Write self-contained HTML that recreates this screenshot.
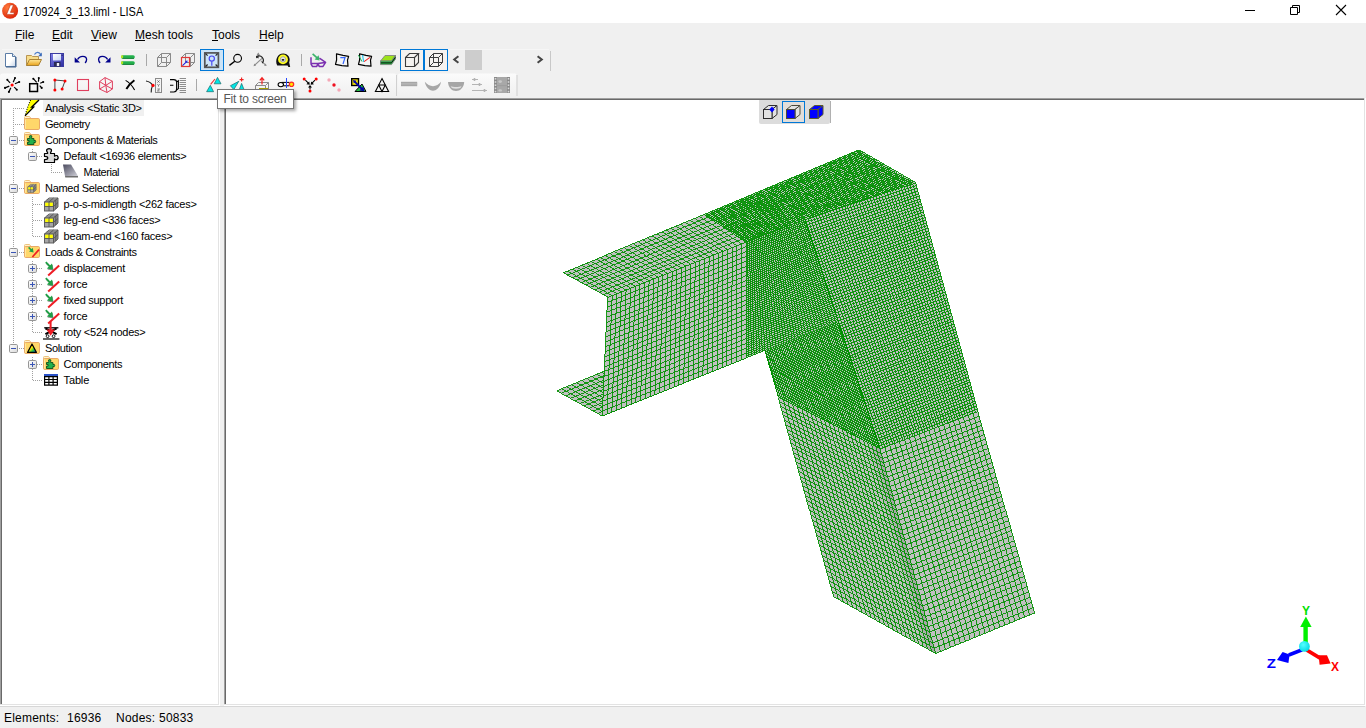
<!DOCTYPE html><html><head><meta charset="utf-8"><title>LISA</title><style>
html,body{margin:0;padding:0;width:1366px;height:728px;overflow:hidden;background:#f0f0f0;
 font-family:"Liberation Sans",sans-serif;color:#000}
.abs{position:absolute}
#title{left:0;top:0;width:1366px;height:23px;background:#fff}
#title .t{position:absolute;left:23px;top:5px;font-size:12px;line-height:15px;white-space:nowrap;
 transform:scaleX(.915);transform-origin:0 0}
.menu{position:absolute;top:28px;font-size:12px;line-height:15px;white-space:nowrap}
.menu u{text-decoration:underline;text-underline-offset:1px}
#tree{left:0;top:98px;width:218px;height:606px;background:#fff;box-sizing:border-box;
 border-left:1px solid #a0a0a0;border-top:1px solid #a0a0a0}
#tree:before{content:"";position:absolute;left:0;top:0;right:0;bottom:0;border-left:1px solid #696969;border-top:1px solid #696969}
.tl{position:absolute;font-size:11px;line-height:16px;height:16px;white-space:nowrap}
#view{left:224px;top:98px;width:1140px;height:606px;background:#fff;box-sizing:border-box;
 border-left:1px solid #a0a0a0;border-top:1px solid #a0a0a0}
#view:before{content:"";position:absolute;left:0;top:0;right:0;bottom:0;border-left:1px solid #696969;border-top:1px solid #696969}
.st{position:absolute;top:711px;font-size:12px;line-height:15px;white-space:nowrap;letter-spacing:.22px}
</style></head><body><div id="title" class="abs"><div class="t">170924_3_13.liml - LISA</div></div><div class="menu" style="left:15px"><u>F</u>ile</div><div class="menu" style="left:52px"><u>E</u>dit</div><div class="menu" style="left:91px"><u>V</u>iew</div><div class="menu" style="left:135px"><u>M</u>esh tools</div><div class="menu" style="left:212px"><u>T</u>ools</div><div class="menu" style="left:259px"><u>H</u>elp</div><div id="tree" class="abs"></div><div class="abs" style="left:43px;top:100px;width:101px;height:16px;background:#f0f0f0"></div><div class="abs" style="left:218px;top:98px;width:1px;height:607px;background:#e3e3e3"></div><div class="abs" style="left:219px;top:98px;width:1px;height:608px;background:#fff"></div><div class="abs" style="left:0;top:704px;width:219px;height:1px;background:#e3e3e3"></div><div class="abs" style="left:0;top:705px;width:220px;height:1px;background:#fff"></div><div id="view" class="abs"></div><div class="abs" style="left:1364px;top:98px;width:1px;height:607px;background:#e3e3e3"></div><div class="abs" style="left:1365px;top:98px;width:1px;height:608px;background:#fff"></div><div class="abs" style="left:224px;top:704px;width:1141px;height:1px;background:#e3e3e3"></div><div class="abs" style="left:224px;top:705px;width:1142px;height:1px;background:#fff"></div><div class="abs" style="left:0;top:706px;width:1365px;height:1px;background:#d7d7d7"></div><div class="tl" style="left:45.0px;top:100px;letter-spacing:-0.235px">Analysis &lt;Static 3D&gt;</div><div class="tl" style="left:45.0px;top:116px;letter-spacing:-0.438px">Geometry</div><div class="tl" style="left:45.0px;top:132px;letter-spacing:-0.361px">Components &amp; Materials</div><div class="tl" style="left:63.6px;top:148px;letter-spacing:-0.256px">Default &lt;16936 elements&gt;</div><div class="tl" style="left:83.6px;top:164px;letter-spacing:-0.463px">Material</div><div class="tl" style="left:45.0px;top:180px;letter-spacing:-0.294px">Named Selections</div><div class="tl" style="left:63.6px;top:196px;letter-spacing:-0.260px">p-o-s-midlength &lt;262 faces&gt;</div><div class="tl" style="left:63.6px;top:212px;letter-spacing:-0.179px">leg-end &lt;336 faces&gt;</div><div class="tl" style="left:63.6px;top:228px;letter-spacing:-0.212px">beam-end &lt;160 faces&gt;</div><div class="tl" style="left:45.0px;top:244px;letter-spacing:-0.398px">Loads &amp; Constraints</div><div class="tl" style="left:63.6px;top:260px;letter-spacing:-0.286px">displacement</div><div class="tl" style="left:63.6px;top:276px;letter-spacing:-0.094px">force</div><div class="tl" style="left:63.6px;top:292px;letter-spacing:-0.268px">fixed support</div><div class="tl" style="left:63.6px;top:308px;letter-spacing:-0.094px">force</div><div class="tl" style="left:63.6px;top:324px;letter-spacing:-0.231px">roty &lt;524 nodes&gt;</div><div class="tl" style="left:45.0px;top:340px;letter-spacing:-0.384px">Solution</div><div class="tl" style="left:63.6px;top:356px;letter-spacing:-0.390px">Components</div><div class="tl" style="left:63.6px;top:372px;letter-spacing:-0.160px">Table</div><svg class="abs" style="left:0;top:0" width="230" height="400" viewBox="0 0 230 400"><path d="M13.5,108V348" stroke="#a0a0a0" stroke-width="1" stroke-dasharray="1 1" shape-rendering="crispEdges"/><path d="M13,108.5H24" stroke="#a0a0a0" stroke-width="1" stroke-dasharray="1 1" shape-rendering="crispEdges"/><path d="M13,124.5H24" stroke="#a0a0a0" stroke-width="1" stroke-dasharray="1 1" shape-rendering="crispEdges"/><path d="M19,140.5H24" stroke="#a0a0a0" stroke-width="1" stroke-dasharray="1 1" shape-rendering="crispEdges"/><path d="M19,188.5H24" stroke="#a0a0a0" stroke-width="1" stroke-dasharray="1 1" shape-rendering="crispEdges"/><path d="M19,252.5H24" stroke="#a0a0a0" stroke-width="1" stroke-dasharray="1 1" shape-rendering="crispEdges"/><path d="M19,348.5H24" stroke="#a0a0a0" stroke-width="1" stroke-dasharray="1 1" shape-rendering="crispEdges"/><path d="M32.5,149V152" stroke="#a0a0a0" stroke-width="1" stroke-dasharray="1 1" shape-rendering="crispEdges"/><path d="M37,156.5H43" stroke="#a0a0a0" stroke-width="1" stroke-dasharray="1 1" shape-rendering="crispEdges"/><path d="M51.5,164V173" stroke="#a0a0a0" stroke-width="1" stroke-dasharray="1 1" shape-rendering="crispEdges"/><path d="M51,172.5H62" stroke="#a0a0a0" stroke-width="1" stroke-dasharray="1 1" shape-rendering="crispEdges"/><path d="M32.5,197V237" stroke="#a0a0a0" stroke-width="1" stroke-dasharray="1 1" shape-rendering="crispEdges"/><path d="M33,204.5H43" stroke="#a0a0a0" stroke-width="1" stroke-dasharray="1 1" shape-rendering="crispEdges"/><path d="M33,220.5H43" stroke="#a0a0a0" stroke-width="1" stroke-dasharray="1 1" shape-rendering="crispEdges"/><path d="M33,236.5H43" stroke="#a0a0a0" stroke-width="1" stroke-dasharray="1 1" shape-rendering="crispEdges"/><path d="M32.5,261V333" stroke="#a0a0a0" stroke-width="1" stroke-dasharray="1 1" shape-rendering="crispEdges"/><path d="M37,268.5H43" stroke="#a0a0a0" stroke-width="1" stroke-dasharray="1 1" shape-rendering="crispEdges"/><path d="M37,284.5H43" stroke="#a0a0a0" stroke-width="1" stroke-dasharray="1 1" shape-rendering="crispEdges"/><path d="M37,300.5H43" stroke="#a0a0a0" stroke-width="1" stroke-dasharray="1 1" shape-rendering="crispEdges"/><path d="M37,316.5H43" stroke="#a0a0a0" stroke-width="1" stroke-dasharray="1 1" shape-rendering="crispEdges"/><path d="M33,332.5H43" stroke="#a0a0a0" stroke-width="1" stroke-dasharray="1 1" shape-rendering="crispEdges"/><path d="M32.5,357V381" stroke="#a0a0a0" stroke-width="1" stroke-dasharray="1 1" shape-rendering="crispEdges"/><path d="M37,364.5H43" stroke="#a0a0a0" stroke-width="1" stroke-dasharray="1 1" shape-rendering="crispEdges"/><path d="M33,380.5H43" stroke="#a0a0a0" stroke-width="1" stroke-dasharray="1 1" shape-rendering="crispEdges"/><rect x="9.5" y="136.5" width="8" height="8" rx="1.2" fill="url(#gbox)" stroke="#969696"/><rect x="11" y="140" width="5" height="1" fill="#3a55b5"/><rect x="9.5" y="184.5" width="8" height="8" rx="1.2" fill="url(#gbox)" stroke="#969696"/><rect x="11" y="188" width="5" height="1" fill="#3a55b5"/><rect x="9.5" y="248.5" width="8" height="8" rx="1.2" fill="url(#gbox)" stroke="#969696"/><rect x="11" y="252" width="5" height="1" fill="#3a55b5"/><rect x="9.5" y="344.5" width="8" height="8" rx="1.2" fill="url(#gbox)" stroke="#969696"/><rect x="11" y="348" width="5" height="1" fill="#3a55b5"/><rect x="28.5" y="152.5" width="8" height="8" rx="1.2" fill="url(#gbox)" stroke="#969696"/><rect x="30" y="156" width="5" height="1" fill="#3a55b5"/><rect x="28.5" y="264.5" width="8" height="8" rx="1.2" fill="url(#gbox)" stroke="#969696"/><rect x="30" y="268" width="5" height="1" fill="#3a55b5"/><rect x="32" y="266" width="1" height="5" fill="#3a55b5"/><rect x="28.5" y="280.5" width="8" height="8" rx="1.2" fill="url(#gbox)" stroke="#969696"/><rect x="30" y="284" width="5" height="1" fill="#3a55b5"/><rect x="32" y="282" width="1" height="5" fill="#3a55b5"/><rect x="28.5" y="296.5" width="8" height="8" rx="1.2" fill="url(#gbox)" stroke="#969696"/><rect x="30" y="300" width="5" height="1" fill="#3a55b5"/><rect x="32" y="298" width="1" height="5" fill="#3a55b5"/><rect x="28.5" y="312.5" width="8" height="8" rx="1.2" fill="url(#gbox)" stroke="#969696"/><rect x="30" y="316" width="5" height="1" fill="#3a55b5"/><rect x="32" y="314" width="1" height="5" fill="#3a55b5"/><rect x="28.5" y="360.5" width="8" height="8" rx="1.2" fill="url(#gbox)" stroke="#969696"/><rect x="30" y="364" width="5" height="1" fill="#3a55b5"/><rect x="32" y="362" width="1" height="5" fill="#3a55b5"/><path d="M30.5,100H39L31.6,107.2H33.6L25,115.9L27.4,108Z" fill="#ffff00"/><path d="M39,100L31.6,107.2H33.6L25,115.9" fill="none" stroke="#000" stroke-width="1.3"/><path d="M30.5,100L27.4,108L25,115.9" fill="none" stroke="#000" stroke-width="1.1" stroke-dasharray="1 1.4"/><path d="M24.5,119.5V117.5Q24.5,116.5 25.5,116.5H29.5L31.0,118.5" fill="#fff4cc" stroke="#ecc27e"/><rect x="24.5" y="118.5" width="15" height="11" rx="1.2" fill="#ffd76a" stroke="#e9a968"/><path d="M25.5,128.5L25.5,119.5V119.5" fill="none" stroke="#ffe7a0" stroke-width="1"/><path d="M24.5,135.5V133.5Q24.5,132.5 25.5,132.5H29.5L31.0,134.5" fill="#fff4cc" stroke="#ecc27e"/><rect x="24.5" y="134.5" width="15" height="11" rx="1.2" fill="#ffd76a" stroke="#e9a968"/><path d="M25.5,144.5L25.5,135.5V135.5" fill="none" stroke="#ffe7a0" stroke-width="1"/><path d="M27.5,138.5h2.2v-1.2q-.8,-1.8 1,-1.8q1.8,0 1,1.8v1.2h2.2v2q1.8,-.8 1.8,1q0,1.8 -1.8,1v2h-6.4v-2.4h1.6v-1.6h-1.6Z" fill="#22b14c" stroke="#0b4d1c" stroke-width=".9"/><path d="M44.5,153.5H47.6V152.6Q45.8,150.4 47.2,149.2Q49,148.0 51,149.2Q52.2,150.4 50.6,152.6V153.5H54.5V156.2Q55.6,155.2 57.2,155.6Q59.2,157.6 57.2,159.6Q55.6,160.0 54.5,159.0V162.5H44.5V159.6Q47.8,159.6 47.8,158.0Q47.8,156.4 44.5,156.4Z" fill="#dadada" stroke="#000" stroke-width="1.2" stroke-linejoin="round"/><path d="M63,164.5H71L78,176.0H65Z" fill="url(#gmat)"/><path d="M65,176.0H78V177.5H65.3Z" fill="#6e6e6e"/><path d="M24.5,183.5V181.5Q24.5,180.5 25.5,180.5H29.5L31.0,182.5" fill="#fff4cc" stroke="#ecc27e"/><rect x="24.5" y="182.5" width="15" height="11" rx="1.2" fill="#ffd76a" stroke="#e9a968"/><path d="M25.5,192.5L25.5,183.5V183.5" fill="none" stroke="#ffe7a0" stroke-width="1"/><path d="M27.8,186.9 L30.6,184.4 H36.2 L33.4,186.9 Z" fill="#bcbcbc" stroke="#555" stroke-width="0.5"/><path d="M33.4,186.9 L36.2,184.4 V190.0 L33.4,192.5 Z" fill="#8e8e8e" stroke="#555" stroke-width="0.5"/><rect x="27.8" y="186.9" width="5.6" height="5.6" fill="#a6a6a6" stroke="#555" stroke-width="0.5"/><rect x="28.2" y="187.3" width="4.7" height="2.4" fill="#ffff00"/><path d="M30.6,186.9 V192.5 M27.8,189.7 H33.4 M30.6,186.9 L33.4,184.4 M29.2,185.7 L34.8,185.7 M34.8,185.7 V191.2" fill="none" stroke="#555" stroke-width="0.5"/><path d="M33.4,189.7 L36.2,187.2" fill="none" stroke="#555" stroke-width="0.5"/><path d="M44.5,202.0 L49.0,198.0 H58.0 L53.5,202.0 Z" fill="#bcbcbc" stroke="#555" stroke-width="0.9"/><path d="M53.5,202.0 L58.0,198.0 V207.0 L53.5,211.0 Z" fill="#8e8e8e" stroke="#555" stroke-width="0.9"/><rect x="44.5" y="202.0" width="9.0" height="9.0" fill="#a6a6a6" stroke="#555" stroke-width="0.9"/><rect x="45.2" y="202.7" width="7.6" height="3.9" fill="#ffff00"/><path d="M49.0,202.0 V211.0 M44.5,206.5 H53.5 M49.0,202.0 L53.5,198.0 M46.7,200.0 L55.8,200.0 M55.8,200.0 V209.0" fill="none" stroke="#555" stroke-width="0.9"/><path d="M53.5,206.5 L58.0,202.5" fill="none" stroke="#555" stroke-width="0.9"/><path d="M44.5,218.0 L49.0,214.0 H58.0 L53.5,218.0 Z" fill="#bcbcbc" stroke="#555" stroke-width="0.9"/><path d="M53.5,218.0 L58.0,214.0 V223.0 L53.5,227.0 Z" fill="#8e8e8e" stroke="#555" stroke-width="0.9"/><rect x="44.5" y="218.0" width="9.0" height="9.0" fill="#a6a6a6" stroke="#555" stroke-width="0.9"/><rect x="45.2" y="218.7" width="7.6" height="3.9" fill="#ffff00"/><path d="M49.0,218.0 V227.0 M44.5,222.5 H53.5 M49.0,218.0 L53.5,214.0 M46.7,216.0 L55.8,216.0 M55.8,216.0 V225.0" fill="none" stroke="#555" stroke-width="0.9"/><path d="M53.5,222.5 L58.0,218.5" fill="none" stroke="#555" stroke-width="0.9"/><path d="M44.5,234.0 L49.0,230.0 H58.0 L53.5,234.0 Z" fill="#bcbcbc" stroke="#555" stroke-width="0.9"/><path d="M53.5,234.0 L58.0,230.0 V239.0 L53.5,243.0 Z" fill="#8e8e8e" stroke="#555" stroke-width="0.9"/><rect x="44.5" y="234.0" width="9.0" height="9.0" fill="#a6a6a6" stroke="#555" stroke-width="0.9"/><rect x="45.2" y="234.7" width="7.6" height="3.9" fill="#ffff00"/><path d="M49.0,234.0 V243.0 M44.5,238.5 H53.5 M49.0,234.0 L53.5,230.0 M46.7,232.0 L55.8,232.0 M55.8,232.0 V241.0" fill="none" stroke="#555" stroke-width="0.9"/><path d="M53.5,238.5 L58.0,234.5" fill="none" stroke="#555" stroke-width="0.9"/><path d="M24.5,247.5V245.5Q24.5,244.5 25.5,244.5H29.5L31.0,246.5" fill="#fff4cc" stroke="#ecc27e"/><rect x="24.5" y="246.5" width="15" height="11" rx="1.2" fill="#ffd76a" stroke="#e9a968"/><path d="M25.5,256.5L25.5,247.5V247.5" fill="none" stroke="#ffe7a0" stroke-width="1"/><path d="M28.6,247.4L31.6,250.4" stroke="#1fa045" stroke-width="1.5"/><path d="M33.6,252.4L29,251.6L32.8,247.8Z" fill="#1fa045"/><path d="M32.4,257.0L39,249.6" stroke="#ee1c24" stroke-width="1.7"/><path d="M46.4,263.2L51.0,267.8" stroke="#8a8a8a" stroke-width="1.6"/><path d="M53.6,270.6L47.4,269.6L52.6,264.4Z" fill="#8a8a8a"/><path d="M45.8,262.2L50.4,266.8" stroke="#1fa045" stroke-width="1.8"/><path d="M53.0,269.6L46.8,268.6L52.0,263.4Z" fill="#1fa045"/><path d="M48.2,275.6L59.2,265.4" stroke="#ee1c24" stroke-width="2"/><path d="M46.4,279.2L51.0,283.8" stroke="#8a8a8a" stroke-width="1.6"/><path d="M53.6,286.6L47.4,285.6L52.6,280.4Z" fill="#8a8a8a"/><path d="M45.8,278.2L50.4,282.8" stroke="#1fa045" stroke-width="1.8"/><path d="M53.0,285.6L46.8,284.6L52.0,279.4Z" fill="#1fa045"/><path d="M48.2,291.6L59.2,281.4" stroke="#ee1c24" stroke-width="2"/><path d="M46.4,295.2L51.0,299.8" stroke="#8a8a8a" stroke-width="1.6"/><path d="M53.6,302.6L47.4,301.6L52.6,296.4Z" fill="#8a8a8a"/><path d="M45.8,294.2L50.4,298.8" stroke="#1fa045" stroke-width="1.8"/><path d="M53.0,301.6L46.8,300.6L52.0,295.4Z" fill="#1fa045"/><path d="M48.2,307.6L59.2,297.4" stroke="#ee1c24" stroke-width="2"/><path d="M46.4,311.2L51.0,315.8" stroke="#8a8a8a" stroke-width="1.6"/><path d="M53.6,318.6L47.4,317.6L52.6,312.4Z" fill="#8a8a8a"/><path d="M45.8,310.2L50.4,314.8" stroke="#1fa045" stroke-width="1.8"/><path d="M53.0,317.6L46.8,316.6L52.0,311.4Z" fill="#1fa045"/><path d="M48.2,323.6L59.2,313.4" stroke="#ee1c24" stroke-width="2"/><path d="M44.2,327.8H58.4" stroke="#000" stroke-width="1.3"/><path d="M45.4,328.4L56.6,334.2M56.6,328.4L45.4,334.2" stroke="#000" stroke-width="2"/><circle cx="47.6" cy="336.2" r="1.4" fill="#fff" stroke="#000" stroke-width=".9"/><circle cx="53.6" cy="336.2" r="1.4" fill="#fff" stroke="#000" stroke-width=".9"/><path d="M43,339.0H59.4" stroke="#000" stroke-width="1.2"/><path d="M50.6,321.6V330.0" fill="none" stroke="#ee1c24" stroke-width="2"/><path d="M46.6,329.6H55L50.6,335.8Z" fill="#ee1c24"/><path d="M24.5,343.5V341.5Q24.5,340.5 25.5,340.5H29.5L31.0,342.5" fill="#fff4cc" stroke="#ecc27e"/><rect x="24.5" y="342.5" width="15" height="11" rx="1.2" fill="#ffd76a" stroke="#e9a968"/><path d="M25.5,352.5L25.5,343.5V343.5" fill="none" stroke="#ffe7a0" stroke-width="1"/><defs><linearGradient id="grain" x1="0" y1="0" x2="1" y2="1"><stop offset="0" stop-color="#ff2020"/><stop offset=".45" stop-color="#ffee00"/><stop offset=".7" stop-color="#20c040"/><stop offset="1" stop-color="#2040ff"/></linearGradient></defs><path d="M32,344.0L36.4,352.4H27.6Z" fill="url(#grain)" stroke="#000" stroke-width="1.2" stroke-linejoin="round"/><path d="M43.5,359.5V357.5Q43.5,356.5 44.5,356.5H48.5L50.0,358.5" fill="#fff4cc" stroke="#ecc27e"/><rect x="43.5" y="358.5" width="15" height="11" rx="1.2" fill="#ffd76a" stroke="#e9a968"/><path d="M44.5,368.5L44.5,359.5V359.5" fill="none" stroke="#ffe7a0" stroke-width="1"/><path d="M46.5,362.5h2.2v-1.2q-.8,-1.8 1,-1.8q1.8,0 1,1.8v1.2h2.2v2q1.8,-.8 1.8,1q0,1.8 -1.8,1v2h-6.4v-2.4h1.6v-1.6h-1.6Z" fill="#22b14c" stroke="#0b4d1c" stroke-width=".9"/><rect x="44" y="374.0" width="14" height="2.2" fill="#2a52c8"/><path d="M44.6,376.6H57.4V385.2H44.6ZM44.6,379.5H57.4M44.6,382.4H57.4M48.9,376.6V385.2M53.1,376.6V385.2" fill="#fff" stroke="#000" stroke-width="1.2"/></svg><div class="st" style="left:4px">Elements:</div><div class="st" style="left:67px">16936</div><div class="st" style="left:116px">Nodes:</div><div class="st" style="left:159px">50833</div><svg id="mesh" width="1366" height="728" viewBox="0 0 1366 728" style="position:absolute;left:0;top:0" shape-rendering="crispEdges" fill="none" stroke="#009000" stroke-width="1"><polygon points="556.7,390.8 706.7,329.0 746.0,358.0 602.2,416.0" fill="#c0c0c0" stroke="none"/><path stroke-width="0.9" d="M556.7,390.8L602.2,416.0M561.7,388.7L607.0,414.1M566.7,386.7L611.8,412.1M571.7,384.6L616.6,410.2M576.7,382.6L621.4,408.3M581.7,380.5L626.2,406.3M586.7,378.4L631.0,404.4M591.7,376.4L635.8,402.5M596.7,374.3L640.5,400.5M601.7,372.3L645.3,398.6M606.7,370.2L650.1,396.7M611.7,368.1L654.9,394.7M616.7,366.1L659.7,392.8M621.7,364.0L664.5,390.9M626.7,362.0L669.3,388.9M631.7,359.9L674.1,387.0M636.7,357.8L678.9,385.1M641.7,355.8L683.7,383.1M646.7,353.7L688.5,381.2M651.7,351.7L693.3,379.3M656.7,349.6L698.1,377.3M661.7,347.5L702.9,375.4M666.7,345.5L707.7,373.5M671.7,343.4L712.4,371.5M676.7,341.4L717.2,369.6M681.7,339.3L722.0,367.7M686.7,337.2L726.8,365.7M691.7,335.2L731.6,363.8M696.7,333.1L736.4,361.9M701.7,331.1L741.2,359.9M706.7,329.0L746.0,358.0M556.7,390.8L706.7,329.0M561.2,393.3L710.6,331.9M565.8,395.8L714.6,334.8M570.4,398.4L718.5,337.7M574.9,400.9L722.4,340.6M579.5,403.4L726.4,343.5M584.0,405.9L730.3,346.4M588.6,408.4L734.2,349.3M593.1,411.0L738.1,352.2M597.7,413.5L742.1,355.1M602.2,416.0L746.0,358.0"/><polygon points="562.5,272.8 704.0,214.5 746.0,242.0 607.6,297.4" fill="#c0c0c0" stroke="none"/><path stroke-width="0.9" d="M562.5,272.8L607.6,297.4M567.2,270.9L612.2,295.6M571.9,268.9L616.8,293.7M576.7,267.0L621.4,291.9M581.4,265.0L626.1,290.0M586.1,263.1L630.7,288.2M590.8,261.1L635.3,286.3M595.5,259.2L639.9,284.5M600.2,257.3L644.5,282.6M605.0,255.3L649.1,280.8M609.7,253.4L653.7,278.9M614.4,251.4L658.3,277.1M619.1,249.5L663.0,275.2M623.8,247.5L667.6,273.4M628.5,245.6L672.2,271.5M633.2,243.7L676.8,269.7M638.0,241.7L681.4,267.9M642.7,239.8L686.0,266.0M647.4,237.8L690.6,264.2M652.1,235.9L695.3,262.3M656.8,233.9L699.9,260.5M661.5,232.0L704.5,258.6M666.3,230.0L709.1,256.8M671.0,228.1L713.7,254.9M675.7,226.2L718.3,253.1M680.4,224.2L722.9,251.2M685.1,222.3L727.5,249.4M689.9,220.3L732.2,247.5M694.6,218.4L736.8,245.7M699.3,216.4L741.4,243.8M704.0,214.5L746.0,242.0M562.5,272.8L704.0,214.5M567.0,275.3L708.2,217.2M571.5,277.7L712.4,220.0M576.0,280.2L716.6,222.8M580.5,282.6L720.8,225.5M585.0,285.1L725.0,228.2M589.6,287.6L729.2,231.0M594.1,290.0L733.4,233.8M598.6,292.5L737.6,236.5M603.1,294.9L741.8,239.2M607.6,297.4L746.0,242.0"/><polygon points="704.0,214.5 858.5,150.0 915.6,183.0 746.0,242.0" fill="#c0c0c0" stroke="none"/><path stroke-width="0.9" d="M704.0,214.5L746.0,242.0M705.6,213.8L747.8,241.4M707.2,213.2L749.5,240.8M708.8,212.5L751.3,240.2M710.4,211.8L753.1,239.5M712.0,211.1L754.8,238.9M713.7,210.5L756.6,238.3M715.3,209.8L758.4,237.7M716.9,209.1L760.1,237.1M718.5,208.5L761.9,236.5M720.1,207.8L763.7,235.9M721.7,207.1L765.4,235.2M723.3,206.4L767.2,234.6M724.9,205.8L769.0,234.0M726.5,205.1L770.7,233.4M728.1,204.4L772.5,232.8M729.8,203.8L774.3,232.2M731.4,203.1L776.0,231.6M733.0,202.4L777.8,230.9M734.6,201.7L779.6,230.3M736.2,201.1L781.3,229.7M737.8,200.4L783.1,229.1M739.4,199.7L784.9,228.5M741.0,199.0L786.6,227.9M742.6,198.4L788.4,227.2M744.2,197.7L790.2,226.6M745.8,197.0L791.9,226.0M747.5,196.4L793.7,225.4M749.1,195.7L795.5,224.8M750.7,195.0L797.2,224.2M752.3,194.3L799.0,223.6M753.9,193.7L800.8,222.9M755.5,193.0L802.5,222.3M757.1,192.3L804.3,221.7M758.7,191.7L806.1,221.1M760.3,191.0L807.8,220.5M761.9,190.3L809.6,219.9M763.5,189.6L811.4,219.3M765.2,189.0L813.1,218.6M766.8,188.3L814.9,218.0M768.4,187.6L816.7,217.4M770.0,187.0L818.4,216.8M771.6,186.3L820.2,216.2M773.2,185.6L822.0,215.6M774.8,184.9L823.7,215.0M776.4,184.3L825.5,214.3M778.0,183.6L827.3,213.7M779.6,182.9L829.0,213.1M781.2,182.2L830.8,212.5M782.9,181.6L832.6,211.9M784.5,180.9L834.3,211.3M786.1,180.2L836.1,210.7M787.7,179.6L837.9,210.0M789.3,178.9L839.6,209.4M790.9,178.2L841.4,208.8M792.5,177.5L843.2,208.2M794.1,176.9L844.9,207.6M795.7,176.2L846.7,207.0M797.3,175.5L848.5,206.4M799.0,174.9L850.2,205.7M800.6,174.2L852.0,205.1M802.2,173.5L853.8,204.5M803.8,172.8L855.5,203.9M805.4,172.2L857.3,203.3M807.0,171.5L859.1,202.7M808.6,170.8L860.8,202.1M810.2,170.2L862.6,201.4M811.8,169.5L864.4,200.8M813.4,168.8L866.1,200.2M815.0,168.1L867.9,199.6M816.7,167.5L869.7,199.0M818.3,166.8L871.4,198.4M819.9,166.1L873.2,197.8M821.5,165.5L875.0,197.1M823.1,164.8L876.7,196.5M824.7,164.1L878.5,195.9M826.3,163.4L880.3,195.3M827.9,162.8L882.0,194.7M829.5,162.1L883.8,194.1M831.1,161.4L885.6,193.4M832.8,160.8L887.3,192.8M834.4,160.1L889.1,192.2M836.0,159.4L890.9,191.6M837.6,158.7L892.6,191.0M839.2,158.1L894.4,190.4M840.8,157.4L896.2,189.8M842.4,156.7L897.9,189.1M844.0,156.0L899.7,188.5M845.6,155.4L901.5,187.9M847.2,154.7L903.2,187.3M848.8,154.0L905.0,186.7M850.5,153.4L906.8,186.1M852.1,152.7L908.5,185.5M853.7,152.0L910.3,184.8M855.3,151.3L912.1,184.2M856.9,150.7L913.8,183.6M858.5,150.0L915.6,183.0M704.0,214.5L858.5,150.0M705.7,215.6L860.8,151.3M707.4,216.7L863.1,152.6M709.0,217.8L865.4,154.0M710.7,218.9L867.6,155.3M712.4,220.0L869.9,156.6M714.1,221.1L872.2,157.9M715.8,222.2L874.5,159.2M717.4,223.3L876.8,160.6M719.1,224.4L879.1,161.9M720.8,225.5L881.3,163.2M722.5,226.6L883.6,164.5M724.2,227.7L885.9,165.8M725.8,228.8L888.2,167.2M727.5,229.9L890.5,168.5M729.2,231.0L892.8,169.8M730.9,232.1L895.0,171.1M732.6,233.2L897.3,172.4M734.2,234.3L899.6,173.8M735.9,235.4L901.9,175.1M737.6,236.5L904.2,176.4M739.3,237.6L906.5,177.7M741.0,238.7L908.7,179.0M742.6,239.8L911.0,180.4M744.3,240.9L913.3,181.7M746.0,242.0L915.6,183.0"/><polygon points="607.6,297.4 746.0,242.0 746.0,358.0 602.2,416.0" fill="#c0c0c0" stroke="none"/><path stroke-width="0.9" d="M607.6,297.4L602.2,416.0M612.2,295.6L607.0,414.1M616.8,293.7L611.8,412.1M621.4,291.9L616.6,410.2M626.1,290.0L621.4,408.3M630.7,288.2L626.2,406.3M635.3,286.3L631.0,404.4M639.9,284.5L635.8,402.5M644.5,282.6L640.5,400.5M649.1,280.8L645.3,398.6M653.7,278.9L650.1,396.7M658.3,277.1L654.9,394.7M663.0,275.2L659.7,392.8M667.6,273.4L664.5,390.9M672.2,271.5L669.3,388.9M676.8,269.7L674.1,387.0M681.4,267.9L678.9,385.1M686.0,266.0L683.7,383.1M690.6,264.2L688.5,381.2M695.3,262.3L693.3,379.3M699.9,260.5L698.1,377.3M704.5,258.6L702.9,375.4M709.1,256.8L707.7,373.5M713.7,254.9L712.4,371.5M718.3,253.1L717.2,369.6M722.9,251.2L722.0,367.7M727.5,249.4L726.8,365.7M732.2,247.5L731.6,363.8M736.8,245.7L736.4,361.9M741.4,243.8L741.2,359.9M746.0,242.0L746.0,358.0M607.6,297.4L746.0,242.0M607.4,302.3L746.0,246.8M607.2,307.3L746.0,251.7M606.9,312.2L746.0,256.5M606.7,317.2L746.0,261.3M606.5,322.1L746.0,266.2M606.2,327.0L746.0,271.0M606.0,332.0L746.0,275.8M605.8,336.9L746.0,280.7M605.6,341.9L746.0,285.5M605.3,346.8L746.0,290.3M605.1,351.8L746.0,295.2M604.9,356.7L746.0,300.0M604.7,361.6L746.0,304.8M604.5,366.6L746.0,309.7M604.2,371.5L746.0,314.5M604.0,376.5L746.0,319.3M603.8,381.4L746.0,324.2M603.6,386.4L746.0,329.0M603.3,391.3L746.0,333.8M603.1,396.2L746.0,338.7M602.9,401.2L746.0,343.5M602.7,406.1L746.0,348.3M602.4,411.1L746.0,353.2M602.2,416.0L746.0,358.0"/><polygon points="746.0,242.0 805.0,219.5 838.2,321.1 746.0,358.0" fill="#c0c0c0" stroke="none"/><path stroke-width="0.9" d="M746.0,242.0L746.0,358.0M747.7,241.3L748.7,356.9M749.5,240.7L751.4,355.8M751.2,240.0L754.1,354.7M752.9,239.4L756.8,353.7M754.7,238.7L759.6,352.6M756.4,238.0L762.3,351.5M758.1,237.4L765.0,350.4M759.9,236.7L767.7,349.3M761.6,236.0L770.4,348.2M763.4,235.4L773.1,347.1M765.1,234.7L775.8,346.1M766.8,234.1L778.5,345.0M768.6,233.4L781.3,343.9M770.3,232.7L784.0,342.8M772.0,232.1L786.7,341.7M773.8,231.4L789.4,340.6M775.5,230.8L792.1,339.5M777.2,230.1L794.8,338.5M779.0,229.4L797.5,337.4M780.7,228.8L800.2,336.3M782.4,228.1L802.9,335.2M784.2,227.4L805.7,334.1M785.9,226.8L808.4,333.0M787.6,226.1L811.1,332.0M789.4,225.5L813.8,330.9M791.1,224.8L816.5,329.8M792.9,224.1L819.2,328.7M794.6,223.5L821.9,327.6M796.3,222.8L824.6,326.5M798.1,222.1L827.4,325.4M799.8,221.5L830.1,324.4M801.5,220.8L832.8,323.3M803.3,220.2L835.5,322.2M805.0,219.5L838.2,321.1M746.0,242.0L805.0,219.5M746.0,244.1L805.6,221.3M746.0,246.1L806.2,223.1M746.0,248.2L806.8,224.9M746.0,250.3L807.4,226.8M746.0,252.4L808.0,228.6M746.0,254.4L808.6,230.4M746.0,256.5L809.1,232.2M746.0,258.6L809.7,234.0M746.0,260.6L810.3,235.8M746.0,262.7L810.9,237.6M746.0,264.8L811.5,239.5M746.0,266.9L812.1,241.3M746.0,268.9L812.7,243.1M746.0,271.0L813.3,244.9M746.0,273.1L813.9,246.7M746.0,275.1L814.5,248.5M746.0,277.2L815.1,250.3M746.0,279.3L815.7,252.2M746.0,281.4L816.3,254.0M746.0,283.4L816.9,255.8M746.0,285.5L817.5,257.6M746.0,287.6L818.0,259.4M746.0,289.6L818.6,261.2M746.0,291.7L819.2,263.0M746.0,293.8L819.8,264.9M746.0,295.9L820.4,266.7M746.0,297.9L821.0,268.5M746.0,300.0L821.6,270.3M746.0,302.1L822.2,272.1M746.0,304.1L822.8,273.9M746.0,306.2L823.4,275.7M746.0,308.3L824.0,277.6M746.0,310.4L824.6,279.4M746.0,312.4L825.2,281.2M746.0,314.5L825.8,283.0M746.0,316.6L826.3,284.8M746.0,318.6L826.9,286.6M746.0,320.7L827.5,288.4M746.0,322.8L828.1,290.3M746.0,324.9L828.7,292.1M746.0,326.9L829.3,293.9M746.0,329.0L829.9,295.7M746.0,331.1L830.5,297.5M746.0,333.1L831.1,299.3M746.0,335.2L831.7,301.1M746.0,337.3L832.3,303.0M746.0,339.4L832.9,304.8M746.0,341.4L833.5,306.6M746.0,343.5L834.1,308.4M746.0,345.6L834.6,310.2M746.0,347.6L835.2,312.0M746.0,349.7L835.8,313.8M746.0,351.8L836.4,315.7M746.0,353.9L837.0,317.5M746.0,355.9L837.6,319.3M746.0,358.0L838.2,321.1"/><clipPath id="cs"><polygon points="765,350.5 838.2,321.1 880,449 778.5,397.5"/></clipPath><g clip-path="url(#cs)"><polygon points="737.0,268.0 838.2,321.1 880.0,449.0 778.5,397.5" fill="#c0c0c0" stroke="none"/><path stroke-width="0.9" d="M737.0,268.0L778.5,397.5M739.2,269.2L780.7,398.6M741.4,270.3L782.9,399.7M743.6,271.5L785.1,400.9M745.8,272.6L787.3,402.0M748.0,273.8L789.5,403.1M750.2,274.9L791.7,404.2M752.4,276.1L793.9,405.3M754.6,277.2L796.2,406.5M756.8,278.4L798.4,407.6M759.0,279.5L800.6,408.7M761.2,280.7L802.8,409.8M763.4,281.9L805.0,410.9M765.6,283.0L807.2,412.1M767.8,284.2L809.4,413.2M770.0,285.3L811.6,414.3M772.2,286.5L813.8,415.4M774.4,287.6L816.0,416.5M776.6,288.8L818.2,417.7M778.8,289.9L820.4,418.8M781.0,291.1L822.6,419.9M783.2,292.2L824.8,421.0M785.4,293.4L827.0,422.1M787.6,294.6L829.2,423.2M789.8,295.7L831.5,424.4M792.0,296.9L833.7,425.5M794.2,298.0L835.9,426.6M796.4,299.2L838.1,427.7M798.6,300.3L840.3,428.8M800.8,301.5L842.5,430.0M803.0,302.6L844.7,431.1M805.2,303.8L846.9,432.2M807.4,304.9L849.1,433.3M809.6,306.1L851.3,434.4M811.8,307.2L853.5,435.6M814.0,308.4L855.7,436.7M816.2,309.6L857.9,437.8M818.4,310.7L860.1,438.9M820.6,311.9L862.3,440.0M822.8,313.0L864.6,441.2M825.0,314.2L866.8,442.3M827.2,315.3L869.0,443.4M829.4,316.5L871.2,444.5M831.6,317.6L873.4,445.6M833.8,318.8L875.6,446.8M836.0,319.9L877.8,447.9M838.2,321.1L880.0,449.0M737.0,268.0L838.2,321.1M737.9,270.8L839.1,323.9M738.8,273.6L840.0,326.7M739.7,276.4L840.9,329.4M740.6,279.3L841.8,332.2M741.5,282.1L842.7,335.0M742.4,284.9L843.7,337.8M743.3,287.7L844.6,340.6M744.2,290.5L845.5,343.3M745.1,293.3L846.4,346.1M746.0,296.2L847.3,348.9M746.9,299.0L848.2,351.7M747.8,301.8L849.1,354.5M748.7,304.6L850.0,357.2M749.6,307.4L850.9,360.0M750.5,310.2L851.8,362.8M751.4,313.0L852.7,365.6M752.3,315.9L853.6,368.4M753.2,318.7L854.6,371.1M754.1,321.5L855.5,373.9M755.0,324.3L856.4,376.7M755.9,327.1L857.3,379.5M756.8,329.9L858.2,382.3M757.8,332.8L859.1,385.1M758.7,335.6L860.0,387.8M759.6,338.4L860.9,390.6M760.5,341.2L861.8,393.4M761.4,344.0L862.7,396.2M762.3,346.8L863.6,399.0M763.2,349.6L864.6,401.7M764.1,352.5L865.5,404.5M765.0,355.3L866.4,407.3M765.9,358.1L867.3,410.1M766.8,360.9L868.2,412.9M767.7,363.7L869.1,415.6M768.6,366.5L870.0,418.4M769.5,369.3L870.9,421.2M770.4,372.2L871.8,424.0M771.3,375.0L872.7,426.8M772.2,377.8L873.6,429.5M773.1,380.6L874.5,432.3M774.0,383.4L875.5,435.1M774.9,386.2L876.4,437.9M775.8,389.1L877.3,440.7M776.7,391.9L878.2,443.4M777.6,394.7L879.1,446.2M778.5,397.5L880.0,449.0"/></g><path d="M765,350.5L778.5,397.5"/><polygon points="778.5,397.5 880.0,449.0 935.6,653.5 833.6,596.6" fill="#c0c0c0" stroke="none"/><linearGradient id="gsh" gradientUnits="userSpaceOnUse" x1="868" y1="449" x2="880" y2="445.8"><stop offset="0" stop-color="#000" stop-opacity="0"/><stop offset="1" stop-color="#000" stop-opacity=".16"/></linearGradient><polygon points="880,449 935.6,653.5 921.6,645.7 866,442" fill="url(#gsh)" stroke="none"/><path stroke-width="0.9" d="M778.5,397.5L833.6,596.6M783.3,399.9L838.4,599.3M788.0,402.3L843.2,601.9M792.7,404.7L847.9,604.6M797.4,407.1L852.6,607.2M802.0,409.4L857.3,609.8M806.6,411.8L861.9,612.4M811.2,414.1L866.5,614.9M815.7,416.4L871.0,617.5M820.3,418.7L875.6,620.0M824.7,421.0L880.0,622.5M829.2,423.2L884.5,625.0M833.6,425.4L888.9,627.5M837.9,427.7L893.3,629.9M842.3,429.9L897.7,632.4M846.6,432.0L902.0,634.8M850.9,434.2L906.3,637.2M855.1,436.4L910.6,639.6M859.3,438.5L914.8,641.9M863.5,440.6L919.0,644.3M867.7,442.8L923.2,646.6M871.8,444.9L927.4,648.9M875.9,446.9L931.5,651.2M880.0,449.0L935.6,653.5M778.5,397.5L880.0,449.0M779.7,402.0L881.3,453.6M781.0,406.5L882.5,458.3M782.3,411.1L883.8,462.9M783.5,415.6L885.1,467.6M784.8,420.2L886.3,472.3M786.0,424.8L887.6,477.0M787.3,429.4L888.9,481.7M788.6,434.0L890.2,486.5M789.9,438.6L891.5,491.3M791.2,443.3L892.8,496.0M792.5,448.0L894.1,500.8M793.8,452.7L895.4,505.6M795.1,457.4L896.7,510.5M796.4,462.1L898.0,515.3M797.7,466.8L899.4,520.2M799.0,471.6L900.7,525.1M800.3,476.4L902.0,530.0M801.7,481.2L903.4,534.9M803.0,486.0L904.7,539.9M804.3,490.8L906.1,544.8M805.7,495.6L907.4,549.8M807.0,500.5L908.8,554.8M808.4,505.4L910.1,559.8M809.7,510.3L911.5,564.9M811.1,515.2L912.9,569.9M812.4,520.2L914.3,575.0M813.8,525.1L915.6,580.1M815.2,530.1L917.0,585.2M816.6,535.1L918.4,590.3M818.0,540.1L919.8,595.5M819.4,545.2L921.2,600.7M820.8,550.2L922.6,605.9M822.2,555.3L924.1,611.1M823.6,560.4L925.5,616.3M825.0,565.5L926.9,621.6M826.4,570.6L928.3,626.8M827.8,575.8L929.8,632.1M829.3,581.0L931.2,637.4M830.7,586.2L932.7,642.8M832.2,591.4L934.1,648.1M833.6,596.6L935.6,653.5"/><polygon points="805.0,219.5 915.6,183.0 978.0,411.5 880.0,449.0" fill="#c0c0c0" stroke="none"/><path stroke-width="0.9" d="M805.0,219.5L880.0,449.0M807.8,218.6L882.5,448.0M810.7,217.6L885.0,447.1M813.5,216.7L887.5,446.1M816.3,215.8L890.1,445.2M819.2,214.8L892.6,444.2M822.0,213.9L895.1,443.2M824.9,212.9L897.6,442.3M827.7,212.0L900.1,441.3M830.5,211.1L902.6,440.3M833.4,210.1L905.1,439.4M836.2,209.2L907.6,438.4M839.0,208.3L910.2,437.5M841.9,207.3L912.7,436.5M844.7,206.4L915.2,435.5M847.5,205.5L917.7,434.6M850.4,204.5L920.2,433.6M853.2,203.6L922.7,432.7M856.0,202.7L925.2,431.7M858.9,201.7L927.7,430.7M861.7,200.8L930.3,429.8M864.6,199.8L932.8,428.8M867.4,198.9L935.3,427.8M870.2,198.0L937.8,426.9M873.1,197.0L940.3,425.9M875.9,196.1L942.8,425.0M878.7,195.2L945.3,424.0M881.6,194.2L947.8,423.0M884.4,193.3L950.4,422.1M887.2,192.4L952.9,421.1M890.1,191.4L955.4,420.2M892.9,190.5L957.9,419.2M895.7,189.6L960.4,418.2M898.6,188.6L962.9,417.3M901.4,187.7L965.4,416.3M904.3,186.7L967.9,415.3M907.1,185.8L970.5,414.4M909.9,184.9L973.0,413.4M912.8,183.9L975.5,412.5M915.6,183.0L978.0,411.5M805.0,219.5L915.6,183.0M805.9,222.2L916.3,185.7M806.7,224.8L917.1,188.3M807.6,227.5L917.8,191.0M808.5,230.2L918.5,193.6M809.4,232.8L919.2,196.3M810.2,235.5L920.0,198.9M811.1,238.2L920.7,201.6M812.0,240.8L921.4,204.3M812.8,243.5L922.1,206.9M813.7,246.2L922.9,209.6M814.6,248.9L923.6,212.2M815.5,251.5L924.3,214.9M816.3,254.2L925.0,217.5M817.2,256.9L925.8,220.2M818.1,259.5L926.5,222.9M819.0,262.2L927.2,225.5M819.8,264.9L927.9,228.2M820.7,267.5L928.7,230.8M821.6,270.2L929.4,233.5M822.4,272.9L930.1,236.1M823.3,275.5L930.8,238.8M824.2,278.2L931.6,241.5M825.1,280.9L932.3,244.1M825.9,283.5L933.0,246.8M826.8,286.2L933.7,249.4M827.7,288.9L934.5,252.1M828.5,291.6L935.2,254.7M829.4,294.2L935.9,257.4M830.3,296.9L936.6,260.1M831.2,299.6L937.4,262.7M832.0,302.2L938.1,265.4M832.9,304.9L938.8,268.0M833.8,307.6L939.5,270.7M834.7,310.2L940.3,273.3M835.5,312.9L941.0,276.0M836.4,315.6L941.7,278.7M837.3,318.2L942.4,281.3M838.1,320.9L943.2,284.0M839.0,323.6L943.9,286.6M839.9,326.2L944.6,289.3M840.8,328.9L945.3,291.9M841.6,331.6L946.1,294.6M842.5,334.2L946.8,297.2M843.4,336.9L947.5,299.9M844.2,339.6L948.3,302.6M845.1,342.3L949.0,305.2M846.0,344.9L949.7,307.9M846.9,347.6L950.4,310.5M847.7,350.3L951.2,313.2M848.6,352.9L951.9,315.8M849.5,355.6L952.6,318.5M850.3,358.3L953.3,321.2M851.2,360.9L954.1,323.8M852.1,363.6L954.8,326.5M853.0,366.3L955.5,329.1M853.8,368.9L956.2,331.8M854.7,371.6L957.0,334.4M855.6,374.3L957.7,337.1M856.5,376.9L958.4,339.8M857.3,379.6L959.1,342.4M858.2,382.3L959.9,345.1M859.1,385.0L960.6,347.7M859.9,387.6L961.3,350.4M860.8,390.3L962.0,353.0M861.7,393.0L962.8,355.7M862.6,395.6L963.5,358.4M863.4,398.3L964.2,361.0M864.3,401.0L964.9,363.7M865.2,403.6L965.7,366.3M866.0,406.3L966.4,369.0M866.9,409.0L967.1,371.6M867.8,411.6L967.8,374.3M868.7,414.3L968.6,377.0M869.5,417.0L969.3,379.6M870.4,419.6L970.0,382.3M871.3,422.3L970.7,384.9M872.2,425.0L971.5,387.6M873.0,427.7L972.2,390.2M873.9,430.3L972.9,392.9M874.8,433.0L973.6,395.6M875.6,435.7L974.4,398.2M876.5,438.3L975.1,400.9M877.4,441.0L975.8,403.5M878.3,443.7L976.5,406.2M879.1,446.3L977.3,408.8M880.0,449.0L978.0,411.5"/><path stroke-width="1.5" d="M805,219.5L880,449"/><polygon points="880.0,449.0 978.0,411.5 1034.6,613.0 935.6,653.5" fill="#c0c0c0" stroke="none"/><path stroke-width="0.9" d="M880.0,449.0L935.6,653.5M884.9,447.1L940.5,651.5M889.8,445.2L945.5,649.4M894.7,443.4L950.5,647.4M899.6,441.5L955.4,645.4M904.5,439.6L960.4,643.4M909.4,437.8L965.3,641.4M914.3,435.9L970.2,639.3M919.2,434.0L975.2,637.3M924.1,432.1L980.1,635.3M929.0,430.2L985.1,633.2M933.9,428.4L990.0,631.2M938.8,426.5L995.0,629.2M943.7,424.6L999.9,627.2M948.6,422.8L1004.9,625.1M953.5,420.9L1009.8,623.1M958.4,419.0L1014.8,621.1M963.3,417.1L1019.7,619.1M968.2,415.2L1024.7,617.0M973.1,413.4L1029.6,615.0M978.0,411.5L1034.6,613.0M880.0,449.0L978.0,411.5M881.3,453.6L979.3,416.1M882.5,458.3L980.6,420.6M883.8,462.9L981.9,425.2M885.1,467.6L983.2,429.8M886.3,472.3L984.4,434.5M887.6,477.0L985.8,439.1M888.9,481.7L987.1,443.8M890.2,486.5L988.4,448.4M891.5,491.3L989.7,453.1M892.8,496.0L991.0,457.8M894.1,500.8L992.3,462.6M895.4,505.6L993.7,467.3M896.7,510.5L995.0,472.1M898.0,515.3L996.4,476.9M899.4,520.2L997.7,481.7M900.7,525.1L999.1,486.5M902.0,530.0L1000.4,491.3M903.4,534.9L1001.8,496.2M904.7,539.9L1003.1,501.0M906.1,544.8L1004.5,505.9M907.4,549.8L1005.9,510.8M908.8,554.8L1007.3,515.8M910.1,559.8L1008.7,520.7M911.5,564.9L1010.1,525.7M912.9,569.9L1011.5,530.6M914.3,575.0L1012.9,535.6M915.6,580.1L1014.3,540.7M917.0,585.2L1015.7,545.7M918.4,590.3L1017.1,550.8M919.8,595.5L1018.5,555.8M921.2,600.7L1020.0,560.9M922.6,605.9L1021.4,566.1M924.1,611.1L1022.9,571.2M925.5,616.3L1024.3,576.3M926.9,621.6L1025.8,581.5M928.3,626.8L1027.2,586.7M929.8,632.1L1028.7,591.9M931.2,637.4L1030.2,597.2M932.7,642.8L1031.6,602.4M934.1,648.1L1033.1,607.7M935.6,653.5L1034.6,613.0"/></svg><svg class="abs" style="left:0;top:0" width="1366" height="728" viewBox="0 0 1366 728"><defs><linearGradient id="gpage" x1="0" y1="0" x2="1" y2="1"><stop offset="0" stop-color="#fff"/><stop offset=".55" stop-color="#fff"/><stop offset="1" stop-color="#c4d3e6"/></linearGradient><linearGradient id="gfold" x1="0" y1="0" x2="0" y2="1"><stop offset="0" stop-color="#ffe89a"/><stop offset="1" stop-color="#e8a21a"/></linearGradient><linearGradient id="gflop" x1="0" y1="0" x2="1" y2="1"><stop offset="0" stop-color="#8080ea"/><stop offset="1" stop-color="#2c2ca0"/></linearGradient><linearGradient id="glabel" x1="0" y1="0" x2="1" y2="1"><stop offset="0" stop-color="#fff"/><stop offset="1" stop-color="#c8d4f4"/></linearGradient><linearGradient id="gband" x1="0" y1="0" x2="0" y2="1"><stop offset="0" stop-color="#fbfbfb"/><stop offset="1" stop-color="#f0f0f0"/></linearGradient><linearGradient id="gmat" x1="0" y1="0" x2="1" y2="1"><stop offset="0" stop-color="#4a4a5e"/><stop offset="1" stop-color="#d0d0d8"/></linearGradient><linearGradient id="gbox" x1="0" y1="0" x2="1" y2="1"><stop offset="0" stop-color="#fff"/><stop offset="1" stop-color="#d8d8d8"/></linearGradient><radialGradient id="gapp" cx=".35" cy=".3" r=".8"><stop offset="0" stop-color="#ff7a3c"/><stop offset="1" stop-color="#d81e05"/></radialGradient><radialGradient id="gsph" cx=".4" cy=".35" r=".7"><stop offset="0" stop-color="#5ff"/><stop offset="1" stop-color="#00d8e4"/></radialGradient></defs><circle cx="10.1" cy="10.8" r="8" fill="url(#gapp)"/><path d="M10.4,5L6.6,14.4H13.6L14.4,12.4H10.4L13.4,5Z" fill="#fff" stroke="#b02000" stroke-width=".5"/><rect x="1245" y="10" width="10" height="1" fill="#000"/><path d="M1290.5,7.5h7v7h-7ZM1292.5,7.5v-2h7v7h-2" fill="none" stroke="#000" stroke-width="1"/><path d="M1336,5L1346,15M1346,5L1336,15" stroke="#000" stroke-width="1.1"/><path d="M3,73.5H394.5Q396,73.5 396,75V96.5H0V76.5Q0,73.5 3,73.5Z" fill="url(#gband)"/><path d="M400,73.5H515Q516.5,73.5 516.5,75V96.5H397.5V76Q397.5,73.5 400,73.5Z" fill="url(#gband)"/><rect x="396" y="75" width="1" height="21" fill="#d0d0d0"/><rect x="516.5" y="75" width="1" height="21" fill="#d0d0d0"/><path d="M10.1,82.8L7.3,79.8" stroke="#000" stroke-width="1.2"/><circle cx="7.3" cy="79.8" r="1.05" fill="#000"/><path d="M13.2,82.2L15.0,78.0" stroke="#000" stroke-width="1.2"/><circle cx="15.0" cy="78.0" r="1.05" fill="#000"/><path d="M14.9,83.8L19.2,82.0" stroke="#000" stroke-width="1.2"/><circle cx="19.2" cy="82.0" r="1.05" fill="#000"/><path d="M14.2,87.1L16.8,89.7" stroke="#000" stroke-width="1.2"/><circle cx="16.8" cy="89.7" r="1.05" fill="#000"/><path d="M10.8,87.7L8.9,91.9" stroke="#000" stroke-width="1.2"/><circle cx="8.9" cy="91.9" r="1.05" fill="#000"/><path d="M9.3,86.1L5.0,87.9" stroke="#000" stroke-width="1.2"/><circle cx="5.0" cy="87.9" r="1.05" fill="#000"/><circle cx="12.1" cy="85" r="1.6" fill="#f00"/><rect x="29.7" y="83.7" width="7.8" height="7.8" fill="none" stroke="#000" stroke-width="1.5"/><path d="M36.7,82.4L33.3,78.7" stroke="#000" stroke-width="1.2"/><circle cx="33.3" cy="78.7" r="1.05" fill="#000"/><path d="M38.4,81.8L38.8,78.0" stroke="#000" stroke-width="1.2"/><circle cx="38.8" cy="78.0" r="1.05" fill="#000"/><path d="M40.2,83.2L43.2,82.0" stroke="#000" stroke-width="1.2"/><circle cx="43.2" cy="82.0" r="1.05" fill="#000"/><path d="M39.7,85.6L41.7,87.9" stroke="#000" stroke-width="1.2"/><circle cx="41.7" cy="87.9" r="1.05" fill="#000"/><path d="M54.9,90.1V80L65,80.9L62.1,89" fill="none" stroke="#333" stroke-width=".9"/><circle cx="54.9" cy="80.0" r="1.5" fill="#f00"/><circle cx="65.0" cy="80.9" r="1.5" fill="#f00"/><circle cx="62.1" cy="89.0" r="1.5" fill="#f00"/><circle cx="54.9" cy="90.1" r="1.5" fill="#f00"/><rect x="77.5" y="79.5" width="11" height="11" fill="none" stroke="#e0405f" stroke-width="1.1"/><path d="M105,77.6L112.4,81.2V89L107,92.5L99.6,89V81.6ZM105.8,85.4L112.4,81.2M105.8,85.4L99.6,81.6M105.8,85.4L107,92.5M105.8,85.4L105,77.6M105.8,85.4L112.4,89M105.8,85.4L99.6,89" fill="none" stroke="#e0405f" stroke-width="1"/><path d="M125.6,80.4C129,82.4 132.4,86 134.6,90" fill="none" stroke="#000" stroke-width="1.1"/><path d="M134.4,80.2C131,82.6 128.4,85.6 126.4,89" fill="none" stroke="#000" stroke-width="2"/><path d="M146,81C149.5,81.6 151.8,83.6 152.6,85.6C151.4,88 151.2,90 151.2,92.6" fill="none" stroke="#222" stroke-width="1.1"/><rect x="155.5" y="78.5" width="6" height="14" fill="#f4f4f4" stroke="#8a8a8a"/><path d="M157.4,80.4l2.2,2.2m0,-2.2l-2.2,2.2M157.4,84.2l1.1,1.2l1.1,-1.2m-1.1,1.2v1.2M157.4,89h2.2l-2.2,2h2.2" fill="none" stroke="#555" stroke-width=".7"/><circle cx="153" cy="85.4" r="1.6" fill="#f00"/><path d="M170,79.6H173.6C175.6,79.6 176.6,80.6 176.6,82V89C176.6,91 175.4,92 173.8,92H170M170,85.2H173.4M176.6,82L178.4,80.8V88.6L176.6,90" fill="none" stroke="#000" stroke-width="1.1"/><rect x="179.6" y="78.0" width="6.4" height="1" fill="#8c8c8c"/><rect x="179.6" y="80.0" width="6.4" height="1" fill="#8c8c8c"/><rect x="179.6" y="82.0" width="6.4" height="1" fill="#8c8c8c"/><rect x="179.6" y="84.0" width="6.4" height="1" fill="#8c8c8c"/><rect x="179.6" y="86.0" width="6.4" height="1" fill="#8c8c8c"/><rect x="179.6" y="88.0" width="6.4" height="1" fill="#8c8c8c"/><rect x="179.6" y="90.0" width="6.4" height="1" fill="#8c8c8c"/><rect x="179.6" y="92.0" width="6.4" height="1" fill="#8c8c8c"/><rect x="196" y="79" width="1" height="12" fill="#a8a8a8"/><path d="M217.5,77.4L221,83.8H214.2Z" fill="#00e6e6" stroke="#1a6a6a" stroke-width=".7"/><path d="M210.3,85.3L213.6,91.7H206.6Z" fill="#00e6e6" stroke="#1a6a6a" stroke-width=".7"/><path d="M210.6,84.4L215,79" stroke="#f03030" stroke-width="1.1"/><path d="M230.4,85.7L238.8,81.3L233.8,89.6Z" fill="#00e6e6" stroke="#1a6a6a" stroke-width=".7"/><path d="M241.6,83.4L244.2,90H239.2Z" fill="#00e6e6" stroke="#1a6a6a" stroke-width=".7"/><path d="M239.6,79.6H243.6M241.6,77.6V81.6" stroke="#f02020" stroke-width="1.1"/><path d="M255.5,92V85.5H265.5V92M255.5,85.5L258.5,82.5H268.5L265.5,85.5M268.5,82.5V90" fill="#f4f4f4" stroke="#8a8a8a" stroke-width="1"/><rect x="259" y="88" width="9" height="1.4" fill="#a8a000"/><path d="M262,84.4V78.4M259.8,80.4L262,77.8L264.2,80.4" fill="none" stroke="#f02020" stroke-width="1.2"/><ellipse cx="280.8" cy="84.6" rx="2.7" ry="2.1" fill="#fff" stroke="#000" stroke-width="1.1"/><path d="M281.6,82.4H289.4M283.6,85.8H289" stroke="#000" stroke-width="1"/><rect x="286" y="78" width="1" height="10" fill="#2848ff"/><circle cx="291.5" cy="84.3" r="2.2" fill="#ffe600" stroke="#ff2a2a" stroke-width="1.2"/><path d="M305.4,80.2L308.6,83.4M315,80.2L311.8,83.4M310,89.6V86.6" stroke="#000" stroke-width="1.1"/><path d="M309.8,84.8L306.4,84.2L309.2,81.4ZM310.6,84.8L314,84.2L311.2,81.4ZM310,85L312,87.6H308Z" fill="#000"/><circle cx="304.2" cy="79.0" r="1.5" fill="#f00"/><circle cx="316.2" cy="79.0" r="1.5" fill="#f00"/><circle cx="310.0" cy="91.0" r="1.5" fill="#f00"/><circle cx="329" cy="80" r="1.7" fill="#f4a8b6"/><circle cx="334" cy="85" r="1.7" fill="#f01020"/><circle cx="339" cy="90" r="1.7" fill="#f4a8b6"/><path d="M355,91.5L362,84L366,91.5Z" fill="#22c040" stroke="#000" stroke-width="1"/><rect x="351.7" y="78.7" width="6.8" height="6.8" fill="#ffee00" stroke="#000" stroke-width="1.4"/><path d="M354.4,81.4L362,89" stroke="#0000a8" stroke-width="1.8"/><path d="M353,80L356.6,80.8L353.8,83.6ZM364.4,91.2L359.4,90.4L363.4,86.4Z" fill="#0000a8"/><path d="M382,78.6L388.6,91.5H375.4ZM378.7,85H385.3L382,91.5Z" fill="none" stroke="#000" stroke-width="1.1"/><rect x="401" y="81.8" width="16.2" height="4.4" fill="#a6a6a6"/><rect x="401" y="83.4" width="16.2" height="1" fill="#bdbdbd"/><path d="M424.8,81.8C426,88 430,90.8 433,90.8C436,90.8 440,88 441,81.8C439,84.6 436,86.2 433,86.2C430,86.2 427,84.6 424.8,81.8Z" fill="#a6a6a6"/><path d="M448,82H464.2C464,87.6 460,91 456,91C452,91 448.2,87.6 448,82Z" fill="#a6a6a6"/><path d="M450.6,86C453,87.4 459,87.4 461.6,86L460.4,88C458,89 454,89 451.8,88Z" fill="#e0e0e0"/><path d="M472,79.5H478M472,84.5H482M472,90.5H487" stroke="#b4b4b4" stroke-width="1"/><path d="M474.5,78V81M479.5,83V86M484.5,89V92" stroke="#b4b4b4" stroke-width="1.6"/><rect x="494" y="77" width="16" height="16" fill="#a8a8a8"/><rect x="494" y="77" width="3" height="16" fill="#8a8a8a"/><rect x="507" y="77" width="3" height="16" fill="#8a8a8a"/><rect x="494.7" y="78.0" width="1.6" height="1.6" fill="#d8d8d8"/><rect x="507.7" y="78.0" width="1.6" height="1.6" fill="#d8d8d8"/><rect x="494.7" y="81.2" width="1.6" height="1.6" fill="#d8d8d8"/><rect x="507.7" y="81.2" width="1.6" height="1.6" fill="#d8d8d8"/><rect x="494.7" y="84.4" width="1.6" height="1.6" fill="#d8d8d8"/><rect x="507.7" y="84.4" width="1.6" height="1.6" fill="#d8d8d8"/><rect x="494.7" y="87.6" width="1.6" height="1.6" fill="#d8d8d8"/><rect x="507.7" y="87.6" width="1.6" height="1.6" fill="#d8d8d8"/><rect x="494.7" y="90.8" width="1.6" height="1.6" fill="#d8d8d8"/><rect x="507.7" y="90.8" width="1.6" height="1.6" fill="#d8d8d8"/><ellipse cx="500.2" cy="81.6" rx="1.8" ry="1.3" fill="#c8c8c8"/><ellipse cx="500.2" cy="90.4" rx="1.8" ry="1.2" fill="#c8c8c8"/><rect x="497" y="85.3" width="10" height=".8" fill="#9a9a9a"/><rect x="2" y="49" width="547" height="1" fill="#f6f6f6"/><rect x="550" y="51" width="1" height="20" fill="#c8c8c8"/><path d="M5.5,53.5H12.5L15.5,56.5V66.5H5.5Z" fill="url(#gpage)" stroke="#5b7ca6"/><path d="M12.5,53.5V56.5H15.5" fill="#e8eef6" stroke="#5b7ca6"/><path d="M6,67H16V57" fill="none" stroke="#3d5f8a" stroke-width="1"/><path d="M26.5,65.5V55.5H31.5L32.5,56.5H38.5V59.5" fill="#f7dc8a" stroke="#b89450"/><path d="M26.5,65.5L29.5,59.5H41.5L38.5,65.5Z" fill="url(#gfold)" stroke="#a98235"/><path d="M34.5,54.5C36,51.5 39.5,51.5 41,55" fill="none" stroke="#4a7bc8" stroke-width="1.2"/><path d="M41.8,52.5V56.2H38.2Z" fill="#3a6ab8"/><rect x="50.5" y="53.5" width="13" height="13" fill="url(#gflop)" stroke="#3a3aa0"/><rect x="53" y="54" width="8" height="6.5" fill="url(#glabel)"/><rect x="61.6" y="54.6" width="1" height="1.4" fill="#202060"/><rect x="54" y="62" width="6.5" height="4.5" fill="#2a2a55"/><rect x="56.8" y="63" width="2.4" height="3" fill="#f0f0f8"/><path d="M74.7,57.2V62.4H80Z" fill="#00008b"/><path d="M77.6,59.6C79.5,55.2 86.6,55.2 86.6,59.6C86.6,61.2 86,62.2 85,62.9" fill="none" stroke="#00008b" stroke-width="1.35"/><path d="M110.5,57.2V62.4H105.2Z" fill="#00008b"/><path d="M107.6,59.6C105.7,55.2 98.6,55.2 98.6,59.6C98.6,61.2 99.2,62.2 100.2,62.9" fill="none" stroke="#00008b" stroke-width="1.35"/><rect x="121" y="55.3" width="13.8" height="3.4" rx="1.6" fill="#22b14c"/><rect x="121" y="55.3" width="2.2" height="3" rx="1.2" fill="#b5e61d"/><rect x="122.5" y="57.9" width="11.5" height="0.9" fill="#157a35"/><rect x="121" y="61.3" width="13.8" height="3.4" rx="1.6" fill="#22b14c"/><rect x="121" y="61.3" width="2.2" height="3" rx="1.2" fill="#b5e61d"/><rect x="122.5" y="63.9" width="11.5" height="0.9" fill="#157a35"/><rect x="146" y="54" width="1" height="12" fill="#a8a8a8"/><rect x="301" y="54" width="1" height="12" fill="#a8a8a8"/><path d="M157.5,57.5h9v9h-9ZM161.5,53.5h9v9h-9ZM157.5,57.5l4,-4M166.5,57.5l4,-4M157.5,66.5l4,-4M166.5,66.5l4,-4" fill="none" stroke="#8a8a8a" stroke-width="1"/><path d="M181.5,57.5h9v9h-9ZM185.5,53.5h9v9h-9ZM181.5,57.5l4,-4M190.5,57.5l4,-4M181.5,66.5l4,-4M190.5,66.5l4,-4" fill="none" stroke="#8a8a8a" stroke-width="1"/><rect x="181.5" y="57.5" width="8" height="9" fill="none" stroke="#e03a3a" stroke-width="1.2"/><path d="M182.8,65.4L186.6,61.6" stroke="#2828e8" stroke-width="1.1"/><path d="M187.6,60.4L187.2,63.2L184.9,60.9Z" fill="#2828e8"/><rect x="200.5" y="49.5" width="23" height="21" fill="#cce4f7" stroke="#0078d7"/><rect x="204.8" y="52.9" width="13.6" height="14.4" fill="none" stroke="#555" stroke-width="1.7"/><path d="M205.6,53.7l2,2M217.6,53.7l-2,2M205.6,66.5l2,-2M217.6,66.5l-2,-2" stroke="#222" stroke-width="1.2"/><circle cx="211.8" cy="58.6" r="2.6" fill="none" stroke="#4a4af0" stroke-width="1.2"/><path d="M211.8,61.2V65.8" stroke="#4a4af0" stroke-width="1.2"/><circle cx="237.6" cy="58.3" r="3.9" fill="none" stroke="#000" stroke-width="1.1"/><path d="M234.8,61.2L229.4,65.4" stroke="#000" stroke-width="1.4"/><path d="M254.2,65.6L262,58.4M258.3,53.6V58.5M261,60.8L266,65.4" stroke="#8c8c8c" stroke-width="1.1" fill="none"/><path d="M253.6,66.2l0.6,-2.6l1.9,1.9ZM258.3,52.6l1.6,2.4h-3.2ZM266.6,66l-2.7,-0.4l1.9,-2Z" fill="#8c8c8c"/><path d="M256.4,57.2C258,55.4 260.6,55.6 262.2,57.4C264,59.6 263.6,61.6 262.2,63.2" stroke="#222" stroke-width="1.2" fill="none"/><path d="M256,55.6l0.2,2.6l2.4,-0.8Z" fill="#222"/><path d="M277.2,65.6C274.6,60 277.6,53.6 283.2,53.6C288,53.6 291,58 289.2,62.6L290.2,66.9H288.4L287.6,65.6Z" fill="#111"/><circle cx="283" cy="59.4" r="4.9" fill="#ffff1e"/><circle cx="283" cy="59.4" r="2.7" fill="#e4e4e4" stroke="#9a9a9a" stroke-width=".8"/><ellipse cx="283" cy="59.8" rx="1.4" ry=".9" fill="#111"/><path d="M311,57.3V63.6M310.4,63.6H318L316.6,66.6H312.6L310.9,63.8M318,63.6L319.2,66.4H323L325.6,62.4L319.4,58.2M318,63.6L325,62.4" fill="none" stroke="#7a2fb0" stroke-width="1.5" stroke-linejoin="round"/><path d="M312.6,53.8L317.4,58.2" stroke="#3cb36c" stroke-width="1.6"/><path d="M319.6,60.4L314.6,59.6L318.6,55.2Z" fill="#3cb36c"/><path d="M336.5,53.8L343,55.3L348.6,56.4L347.5,60.2L348,66.2L342,65.6L335.5,64.4L336.6,60Z" fill="#f6f6f6" stroke="#000" stroke-width="1.2" stroke-linejoin="round"/><path d="M340.3,57.6H345L343,64" fill="none" stroke="#3668ff" stroke-width="1.2"/><path d="M359.6,53.8L366,55.3L371.6,56.4L370.5,60.2L371,66.2L365,65.6L358.5,64.4L359.6,60Z" fill="#f6f6f6" stroke="#000" stroke-width="1.2" stroke-linejoin="round"/><path d="M358.4,55L362,61.6" stroke="#20b050" stroke-width="1"/><path d="M362.6,55L363.6,61.8" stroke="#20c8f0" stroke-width="1.1"/><path d="M364,61.6L370,57.4" stroke="#f02020" stroke-width="1.1"/><path d="M380.5,61L385,55.5H395.5L391.5,61Z" fill="#9de31c" stroke="#858585" stroke-width=".9"/><path d="M380.5,61H391.5L395.5,55.5V59L391.5,64.6H380.5Z" fill="#23c043" stroke="#7a7a7a" stroke-width=".8"/><path d="M380.8,62.9H391.4L395.4,57.4" fill="none" stroke="#101010" stroke-width="1"/><rect x="400.5" y="49.5" width="23" height="21" fill="#f6f3f0" stroke="#0078d7"/><rect x="424.5" y="49.5" width="23" height="21" fill="#f6f3f0" stroke="#0078d7"/><path d="M405.5,57.5H414.5V66.5H405.5ZM405.5,57.5L409.5,53.5H418.5L414.5,57.5M418.5,53.5V62.5L414.5,66.5" fill="none" stroke="#3c3c3c" stroke-width="1.1"/><path d="M429.5,57.5h9v9h-9ZM433.5,53.5h9v9h-9ZM429.5,57.5l4,-4M438.5,57.5l4,-4M429.5,66.5l4,-4M438.5,66.5l4,-4" fill="none" stroke="#3c3c3c" stroke-width="1"/><path d="M458.4,56.2L454.2,59.5L458.4,62.8" fill="none" stroke="#444" stroke-width="2"/><rect x="465" y="50" width="17" height="20" fill="#cdcdcd"/><path d="M537.6,56.2L541.8,59.5L537.6,62.8" fill="none" stroke="#444" stroke-width="2"/><path d="M759,100H830V122Q830,124 828,124H761Q759,124 759,122Z" fill="#dcdcdc"/><rect x="830" y="101" width="1" height="22" fill="#b0b0b0"/><rect x="782.5" y="101.5" width="22" height="21" fill="#e2deda" stroke="#0078d7"/><path d="M763.5,109.5L768.5,105.5H777.0L772.0,109.5Z" fill="#e2e2e2" stroke="#2c2c2c"/><path d="M777.0,105.5V114.5L772.0,118.5V109.5Z" fill="#e2e2e2" stroke="#2c2c2c"/><rect x="763.5" y="109.5" width="8.5" height="9" fill="#e2e2e2" stroke="#2c2c2c"/><path d="M772,106.4L774.6,109.4L772,112.6L769.2,109.4Z" fill="#0000ff"/><path d="M786.5,109.5L791.5,105.5H800.0L795.0,109.5Z" fill="#e2e2e2" stroke="#4a4a3a"/><path d="M800.0,105.5V114.5L795.0,118.5V109.5Z" fill="#e2e2e2" stroke="#4a4a3a"/><rect x="786.5" y="109.5" width="8.5" height="9" fill="#0000ff" stroke="#4a4a3a"/><path d="M809.5,109.5L814.5,105.5H823.0L818.0,109.5Z" fill="#0000ff" stroke="#5a5a2a"/><path d="M823.0,105.5V114.5L818.0,118.5V109.5Z" fill="#0000ff" stroke="#5a5a2a"/><rect x="809.5" y="109.5" width="8.5" height="9" fill="#0000ff" stroke="#5a5a2a"/><rect x="1303.4" y="625" width="4.4" height="18" fill="#00f000"/><path d="M1300.2,627L1305.9,616.4L1311.6,627Z" fill="#00f000"/><path d="M1307,648L1321,656.6L1319.6,660L1305.6,651.4Z" fill="#ff0000"/><path d="M1318.6,655.3H1327L1330.6,663.4L1319.6,664.8Z" fill="#ff0000"/><path d="M1301.6,648L1288.2,653.2L1289.4,656.8L1302.8,651.6Z" fill="#0000ff"/><path d="M1277,660L1282.6,652L1289.6,654.4L1288.4,663Z" fill="#0000ff"/><circle cx="1304.4" cy="646.4" r="5.4" fill="url(#gsph)"/><text x="1305.9" y="614.6" text-anchor="middle" font-family="Liberation Sans,sans-serif" font-weight="bold" font-size="12" fill="#00e000">Y</text><text x="1334.9" y="671" text-anchor="middle" font-family="Liberation Sans,sans-serif" font-weight="bold" font-size="12" fill="#ff0000">X</text><text transform="translate(1271.4,667.6) scale(1.25,1)" text-anchor="middle" font-family="Liberation Sans,sans-serif" font-weight="bold" font-size="12" fill="#0000ff">Z</text></svg><div class="abs" style="left:217px;top:89px;width:75px;height:18px;background:#fff;border:1px solid #767676;box-shadow:2px 2px 3px rgba(0,0,0,.35)"></div><div class="abs" style="left:223.5px;top:91.5px;font-size:12px;line-height:15px;color:#575757;letter-spacing:-.23px;white-space:nowrap">Fit to screen</div></body></html>
